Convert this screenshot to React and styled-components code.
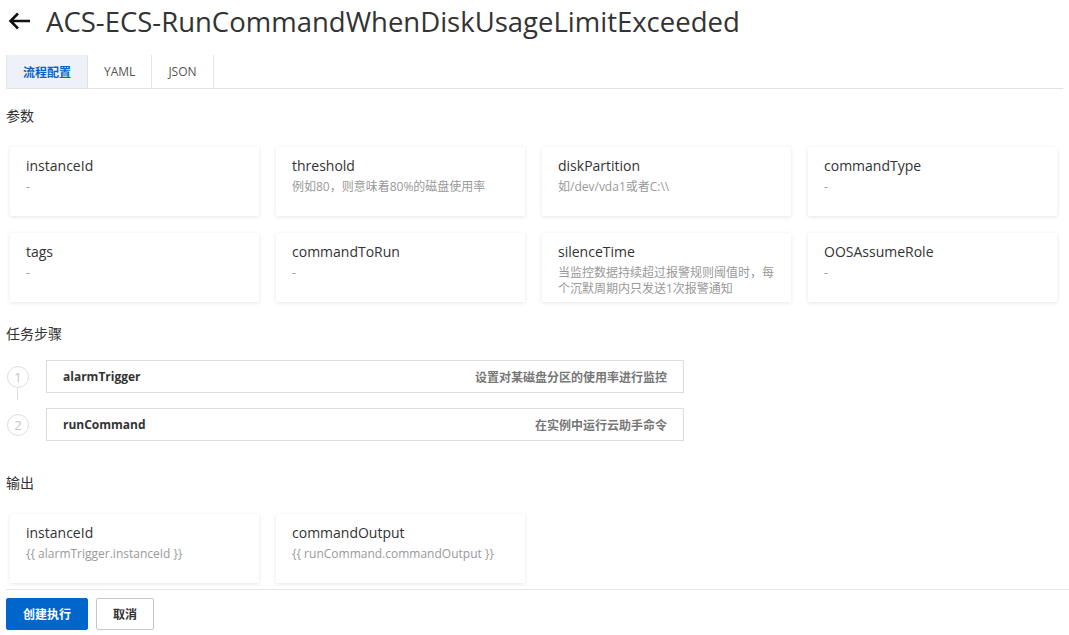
import React from 'react'
import styled, { createGlobalStyle } from 'styled-components'

const GlobalStyle = createGlobalStyle`
  body {
    margin: 0;
    background: #fff;
    font-family: "Open Sans", "Noto Sans CJK SC", sans-serif;
    color: #333;
  }
`

const Page = styled.div`
  width: 1069px;
  padding: 0 6px;
  box-sizing: border-box;
`

const Header = styled.div`
  display: flex;
  align-items: center;
  height: 42px;
  gap: 14px;
  padding-left: 2px;
`

const BackIcon = styled.svg`
  width: 24px;
  height: 20px;
  display: block;
`

const Title = styled.h1`
  margin: 0;
  font-size: 27.5px;
  font-weight: 500;
  color: #333;
`

const Tabs = styled.div`
  display: flex;
  margin-top: 13px;
  border-bottom: 1px solid #e3e3e3;
`

const Tab = styled.div`
  height: 33px;
  padding: 0 16px;
  display: flex;
  align-items: center;
  font-size: 12px;
  font-weight: ${p => (p.$active ? 700 : 400)};
  color: ${p => (p.$active ? '#0a63c4' : '#555')};
  background: ${p => (p.$active ? '#eef2f8' : '#fff')};
  border-right: 1px solid #e3e3e3;
  border-left: ${p => (p.$active ? '1px solid #e3e3e3' : 'none')};
`

const SectionTitle = styled.div`
  font-size: 14px;
  line-height: 20px;
  color: #333;
  margin-top: ${p => p.$top}px;
  margin-bottom: ${p => p.$bottom}px;
`

const CardGrid = styled.div`
  display: grid;
  grid-template-columns: repeat(4, 249px);
  gap: 17px;
  padding-left: 4px;
`

const Card = styled.div`
  height: 69px;
  box-sizing: border-box;
  padding: 9px 16px 0;
  background: #fff;
  box-shadow: 0 1px 4px rgba(0, 0, 0, 0.1);
`

const CardLabel = styled.div`
  font-size: 14px;
  line-height: 20px;
  color: #333;
`

const CardValue = styled.div`
  margin-top: 3px;
  font-size: 12px;
  line-height: 16px;
  color: #999;
`

const Steps = styled.div`
  display: flex;
  flex-direction: column;
  gap: 15px;
`

const StepRow = styled.div`
  display: flex;
  align-items: center;
  gap: 17px;
  position: relative;
`

const StepNum = styled.div`
  width: 20px;
  height: 20px;
  margin-left: 1px;
  border: 1px solid #ddd;
  border-radius: 50%;
  display: flex;
  align-items: center;
  justify-content: center;
  font-size: 13px;
  color: #c4c4c4;
  background: #fff;
`

const Connector = styled.div`
  position: absolute;
  left: 11px;
  top: 28px;
  width: 1px;
  height: 12px;
  background: #ddd;
`

const StepBox = styled.div`
  width: 638px;
  height: 33px;
  box-sizing: border-box;
  border: 1px solid #ddd;
  display: flex;
  align-items: center;
  justify-content: space-between;
  padding: 0 16px;
  font-size: 12px;
`

const StepName = styled.span`
  font-weight: 700;
  color: #333;
`

const StepDesc = styled.span`
  font-weight: 700;
  color: #777;
`

const Divider = styled.div`
  margin-top: 6px;
  margin-right: -6px;
  border-top: 1px solid #e5e5e5;
`

const Footer = styled.div`
  display: flex;
  gap: 8px;
  margin-top: 8px;
`

const Button = styled.button`
  height: 32px;
  padding: 0 16px;
  font-family: inherit;
  font-size: 12px;
  font-weight: 700;
  border-radius: 2px;
  cursor: pointer;
  color: ${p => (p.$primary ? '#fff' : '#333')};
  background: ${p => (p.$primary ? '#0066cc' : '#fff')};
  border: 1px solid ${p => (p.$primary ? '#0066cc' : '#c4c6cc')};
`

const params = [
  { name: 'instanceId', desc: '-' },
  { name: 'threshold', desc: '例如80，则意味着80%的磁盘使用率' },
  { name: 'diskPartition', desc: '如/dev/vda1或者C:\\\\' },
  { name: 'commandType', desc: '-' },
  { name: 'tags', desc: '-' },
  { name: 'commandToRun', desc: '-' },
  { name: 'silenceTime', desc: '当监控数据持续超过报警规则阈值时，每个沉默周期内只发送1次报警通知' },
  { name: 'OOSAssumeRole', desc: '-' },
]

const steps = [
  { name: 'alarmTrigger', desc: '设置对某磁盘分区的使用率进行监控' },
  { name: 'runCommand', desc: '在实例中运行云助手命令' },
]

const outputs = [
  { name: 'instanceId', desc: '{{ alarmTrigger.instanceId }}' },
  { name: 'commandOutput', desc: '{{ runCommand.commandOutput }}' },
]

const App = () => {
  return (
    <Page>
      <GlobalStyle />
      <Header>
        <BackIcon viewBox="0 0 24 20">
          <path d="M22 10H3M10 2.5L2.5 10L10 17.5" fill="none" stroke="#111" strokeWidth="2.6" />
        </BackIcon>
        <Title>ACS-ECS-RunCommandWhenDiskUsageLimitExceeded</Title>
      </Header>

      <Tabs>
        <Tab $active>流程配置</Tab>
        <Tab>YAML</Tab>
        <Tab>JSON</Tab>
      </Tabs>

      <SectionTitle $top={17} $bottom={21}>参数</SectionTitle>
      <CardGrid>
        {params.map(p => (
          <Card key={p.name}>
            <CardLabel>{p.name}</CardLabel>
            <CardValue>{p.desc}</CardValue>
          </Card>
        ))}
      </CardGrid>

      <SectionTitle $top={22} $bottom={16}>任务步骤</SectionTitle>
      <Steps>
        {steps.map((s, i) => (
          <StepRow key={s.name}>
            <StepNum>{i + 1}</StepNum>
            {i < steps.length - 1 && <Connector />}
            <StepBox>
              <StepName>{s.name}</StepName>
              <StepDesc>{s.desc}</StepDesc>
            </StepBox>
          </StepRow>
        ))}
      </Steps>

      <SectionTitle $top={32} $bottom={21}>输出</SectionTitle>
      <CardGrid>
        {outputs.map(o => (
          <Card key={o.name}>
            <CardLabel>{o.name}</CardLabel>
            <CardValue>{o.desc}</CardValue>
          </Card>
        ))}
      </CardGrid>

      <Divider />
      <Footer>
        <Button $primary>创建执行</Button>
        <Button>取消</Button>
      </Footer>
    </Page>
  )
}

export default App
